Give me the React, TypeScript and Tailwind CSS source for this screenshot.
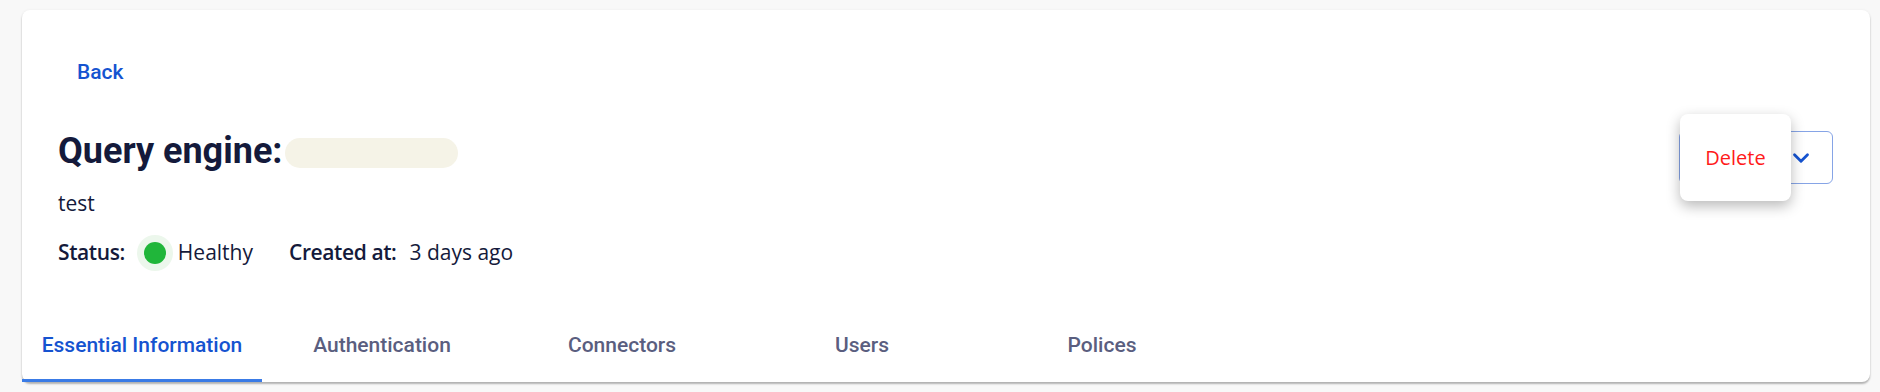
import { ChevronDown } from 'lucide-react';

const tabs = ['Essential Information', 'Authentication', 'Connectors', 'Users', 'Polices'];

export default function App() {
  const active = 0;

  return (
    <div className="min-h-screen bg-[#f8f8f8] pl-[22px] pr-[10px] pt-[10px]">
      <div className="relative h-[372px] w-[1848px] rounded-lg bg-white shadow-[0_2px_2px_rgba(0,0,0,0.28),0_0_3px_rgba(0,0,0,0.05)]">
        {/* Header */}
        <div className="flex items-start justify-between pl-[36px] pr-[37px]">
          <div>
            <button className="ml-[19px] mt-[48px] text-[21px] leading-[28px] font-medium text-[#1553d0] [font-family:Roboto,sans-serif]">
              Back
            </button>
            <div className="mt-[44px] flex items-center">
              <h1 className="text-[36px] leading-[43px] font-bold text-[#141a3b] [font-family:Roboto,sans-serif]">
                Query engine:
              </h1>
              <span className="ml-[3px] mt-[2px] inline-block h-[30px] w-[173px] rounded-full bg-[#f5f3e7]" />
            </div>
            <p className="mt-[16px] text-[21px] leading-[28px] text-[#141a3b] [font-family:'Open_Sans',sans-serif]">test</p>
            <div className="mt-[18px] flex h-[36px] items-center text-[21px] text-[#141a3b] [font-family:'Open_Sans',sans-serif]">
              <span className="font-semibold tracking-[-0.4px]">Status:</span>
              <span className="ml-[12px] flex h-[36px] w-[36px] items-center justify-center rounded-full bg-[#ecf7ec]">
                <span className="h-[22px] w-[22px] rounded-full bg-[#20b63a]" />
              </span>
              <span className="ml-[5px]">Healthy</span>
              <span className="ml-[36px] font-semibold tracking-[-0.4px]">Created at:</span>
              <span className="ml-[13px]">3 days ago</span>
            </div>
          </div>

          {/* Actions split button with open menu */}
          <div className="relative mt-[121px]">
            <div className="flex h-[53px] w-[154px] items-center rounded-md border border-[#86a4e6]">
              <span className="flex-1" />
              <span className="flex w-[63px] items-center justify-center text-[#1553d0]">
                <ChevronDown size={26} strokeWidth={2.6} />
              </span>
            </div>
            <div className="absolute left-[1px] top-[-17px] flex h-[87px] w-[111px] items-center justify-center rounded-lg bg-white shadow-[0_5px_14px_rgba(0,0,0,0.28)]">
              <span className="text-[20px] text-[#ff1a1a] [font-family:'Open_Sans',sans-serif]">Delete</span>
            </div>
          </div>
        </div>

        {/* Tabs */}
        <nav className="absolute bottom-0 left-0 flex">
          {tabs.map((tab, i) => (
            <div
              key={tab}
              className={
                i === active
                  ? 'flex h-[64px] w-[240px] items-center justify-center border-b-[3px] border-[#3a7be6] pb-[5px] text-[21px] font-medium text-[#1553d0] [font-family:Roboto,sans-serif]'
                  : 'flex h-[64px] w-[240px] items-center justify-center border-b-[3px] border-transparent pb-[5px] text-[21px] font-medium text-[#5a5e7f] [font-family:Roboto,sans-serif]'
              }
            >
              {tab}
            </div>
          ))}
        </nav>
      </div>
    </div>
  );
}
